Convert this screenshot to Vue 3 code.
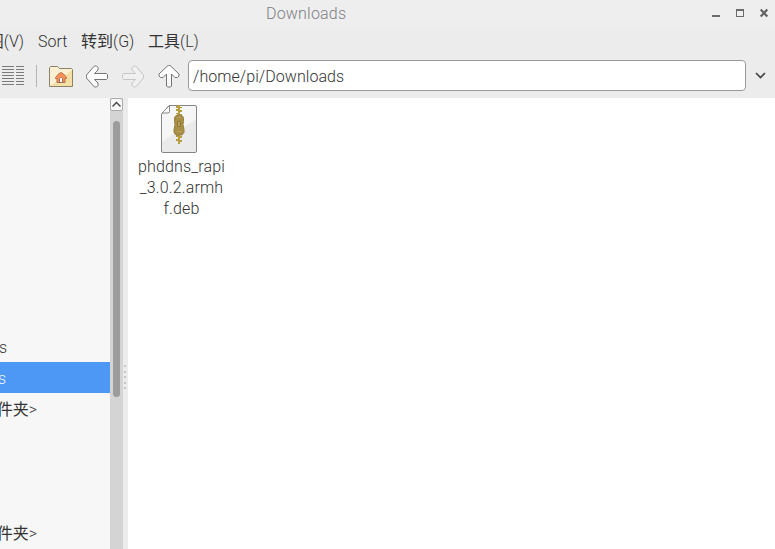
<script setup>
const menus = [
  { cjk: '图', latin: '(V)', cls: 'view' },
  { cjk: '', latin: 'Sort', cls: 'sort' },
  { cjk: '转到', latin: '(G)', cls: 'go' },
  { cjk: '工具', latin: '(L)', cls: 'tools' },
]
const places = [
  { cjk: '', latin: 's', cls: 'short' },
  { cjk: '', latin: 's', cls: 'short selected' },
  { cjk: '件夹', latin: '>', cls: 'long' },
  { cjk: '件夹', latin: '>', cls: 'long last' },
]
const lines = [0, 3, 6, 9, 12, 15, 18]
const fileName = ['phddns_rapi', '_3.0.2.armh', 'f.deb']
</script>

<template>
  <div class="window">
    <header class="titlebar">
      <div class="title">Downloads</div>
      <svg class="controls" width="60" height="12" viewBox="0 0 60 12" shape-rendering="crispEdges">
        <path d="M0 9h8v2H0z" fill="#6b6b6b" />
        <path d="M24 3h8v8h-8zM25 5v5h6V5z" fill="#6b6b6b" fill-rule="evenodd" />
        <path d="M48.700 3.500l6.600 7M55.300 3.500l-6.600 7" stroke="#626262" stroke-width="2.200" shape-rendering="auto" />
      </svg>
    </header>
    <nav class="menubar">
      <span v-for="m in menus" :key="m.cls" :class="['menu', m.cls]"><b v-if="m.cjk">{{ m.cjk }}</b>{{ m.latin }}</span>
    </nav>
    <div class="toolbar">
      <svg class="tools-icons" width="188" height="36" viewBox="0 0 188 36">
        <defs>
          <linearGradient id="arrow" x1="0" y1="0" x2="0" y2="1">
            <stop offset="0" stop-color="#fff" /><stop offset="1" stop-color="#f8f8f8" />
          </linearGradient>
        </defs>
        <g stroke="#7b7b7b" stroke-width="1">
          <path v-for="y in lines" :key="y" :d="`M2 ${y + 4.5}h12M16 ${y + 4.5}h8`" />
        </g>
        <path d="M36.5 3v22" stroke="#b5b5b5" />
        <path d="M49.5 24.500v-19l1-1h7l2 2h12l1 1v17z" fill="#faf1d5" />
        <path d="M50 24L72 8v16z" fill="#f3e0a5" />
        <path d="M49.500 24.500v-19l1-1h7l2 2h12l1 1v17z" fill="none" stroke="#8e8066" />
        <path d="M61 10.500l2.500 1.500 3 3.500v1h-1.500v4h-8v-4h-1.500v-1l3-3.500z" fill="#ff9157" stroke="#b5714b" />
        <path d="M59.500 20.500v-4l1-1h1l1 1v4z" fill="#fff" stroke="#7c5a48" stroke-width=".8" />
        <path class="arrow" d="M86.5 14.5v-1.5l7-8 1-1h2l1.5 1.5v2.5l-3.5 3.5h12l1 1v4l-1 1h-12l3.500 3.500v2.500l-1.500 1.500h-2l-1-1-7-8z" />
        <path class="arrow disabled" d="M143.500 14.500v-1.500l-7-8-1-1h-2l-1.500 1.500v2.500l3.500 3.500h-12l-1 1v4l1 1h12l-3.500 3.500v2.500l1.500 1.500h2l1-1 7-8z" />
        <path class="arrow" d="M168.500 3.500h1.500l8 7.500 1 1v2l-1.500 1.500h-2.500l-3.500-3.500v12l-1 1h-3l-1-1v-12l-3.500 3.500h-2.500l-1.500-1.500v-2l1-1 8-7.500z" />
      </svg>
      <div class="address"><span>/home/pi/Downloads</span></div>
      <svg class="dropdown" width="12" height="10" viewBox="0 0 12 10">
        <path d="M1 2l4.500 4.500L10 2" fill="none" stroke="#444" stroke-width="1.700" />
      </svg>
    </div>
    <main class="body">
      <aside class="places">
        <div v-for="(p, i) in places" :key="i" :class="['place', p.cls]"><span><b v-if="p.cjk">{{ p.cjk }}</b>{{ p.latin }}</span></div>
      </aside>
      <div class="scrollbar">
        <div class="up">
          <svg width="11" height="11" viewBox="0 0 11 11"><path d="M1.500 7.500l4-4 4 4" fill="none" stroke="#444" stroke-width="1.400" /></svg>
        </div>
        <div class="thumb"></div>
      </div>
      <div class="splitter"><i v-for="n in 5" :key="n"></i></div>
      <section class="files">
        <div class="file">
          <svg width="38" height="50" viewBox="0 0 38 50">
            <path d="M9 1.500h26q1.500 0 1.500 1.500v44q0 1.500-1.500 1.500H3q-1.500 0-1.500-1.500V10z" fill="#f6f6f6" />
            <path d="M2 38L36 15v33H2z" fill="#eaeaea" />
            <path d="M9 1.500h26q1.500 0 1.500 1.500v44q0 1.500-1.500 1.500H3q-1.500 0-1.500-1.500V10z" fill="none" stroke="#858585" />
            <path d="M9.500 1.500v6q0 1.500-1.500 1.500H2z" fill="#fff" stroke="#858585" />
            <path d="M17 1h3v2h2v1h-2v2h2v2h-2v2h2v2h-5v-2h-1V9h2V7h-2V5h2V4h-2V2h1zM17 30h3v2h2v2h-2v2h2v2h-2v2h-2v-3h-2v-2h2v-2h-2v-2h1z" fill="#b99c3e" />
            <path d="M16 11.500h6l1.500 2v4l-.5 3 1 5v3l-2 2.500h-6l-2-2.500v-3l1-5-.5-3v-4z" fill="#a98f47" stroke="#978043" />
            <path d="M17 13.500h4M16.500 27.500h5" stroke="#b9a15a" fill="none" />
            <rect x="17.500" y="17.500" width="3" height="5" rx="1" fill="#b9a057" stroke="#857132" />
          </svg>
          <div class="file-name"><span v-for="l in fileName" :key="l">{{ l }}</span></div>
        </div>
      </section>
    </main>
  </div>
</template>

<style>
body { margin: 0; overflow: hidden; }
</style>

<style scoped>
.window { width: 775px; height: 549px; overflow: hidden; display: flex; flex-direction: column; background: #ececec; color: #333; font: 300 16px/21px Roboto, "Noto Sans CJK SC", sans-serif; }
b { font-weight: 400; }
.titlebar { height: 27px; flex: none; display: flex; justify-content: space-between; background: #eee; color: #7d8085; }
.title { padding: 3px 0 0 266px; letter-spacing: .2px; }
.controls { margin: 6px 3px 0 0; }
.menubar { height: 31px; flex: none; display: grid; grid-template-columns: 24px 43px 67px 60px; align-items: start; padding-top: 4px; box-sizing: border-box; }
.menu { white-space: nowrap; line-height: 21px; }
.view { justify-self: end; }
.sort, .go, .tools { padding-left: 14px; }
.toolbar { height: 40px; flex: none; display: flex; align-items: flex-start; }
.tools-icons { flex: none; margin-top: 4px; }
.arrow { fill: url(#arrow); stroke: #747474; }
.disabled { fill: #f0f0f0; stroke: #c5c5c5; }
.address { box-sizing: border-box; width: 558px; height: 31px; margin-top: 2px; border: 1px solid #999; border-radius: 4px; background: #fff; padding: 5px 4px 3px; line-height: 21px; letter-spacing: .05px; }
.dropdown { margin: 13px 0 0 9px; }
.body { flex: 1; min-height: 0; display: flex; }
.places { width: 110px; flex: none; box-sizing: border-box; padding-top: 233px; background: #f7f7f7; overflow: hidden; }
.place { height: 31px; box-sizing: border-box; padding-top: 1px; display: flex; align-items: center; white-space: nowrap; }
.place span { display: flex; justify-content: flex-end; width: 7px; flex: none; }
.place.selected span { width: 6px; }
.place.long span { width: 37px; }
.selected { background: #4e98f5; color: #edf5ff; }
.last { margin-top: 93px; }
.scrollbar { width: 13px; flex: none; background: #d4d4d4; }
.up { box-sizing: border-box; width: 13px; height: 13px; border: 1px solid #aaa; border-radius: 2px; background: #fafafa; }
.up svg { display: block; }
.thumb { width: 7px; height: 276px; margin: 10px 0 0 3px; border-radius: 4px; background: #9c9c9c; }
.splitter { width: 5px; flex: none; box-sizing: border-box; padding: 267px 0 0 1px; background: #ececec; }
.splitter i { display: block; width: 2px; height: 2px; margin-bottom: 3.500px; background: #c5c5c5; }
.files { flex: 1; background: #fff; padding: 6px 0 0 8px; }
.file { width: 91px; display: flex; flex-direction: column; align-items: center; }
.file svg { margin-right: 5px; }
.file-name { display: flex; flex-direction: column; align-items: center; margin-top: 2px; letter-spacing: .15px; }
</style>
